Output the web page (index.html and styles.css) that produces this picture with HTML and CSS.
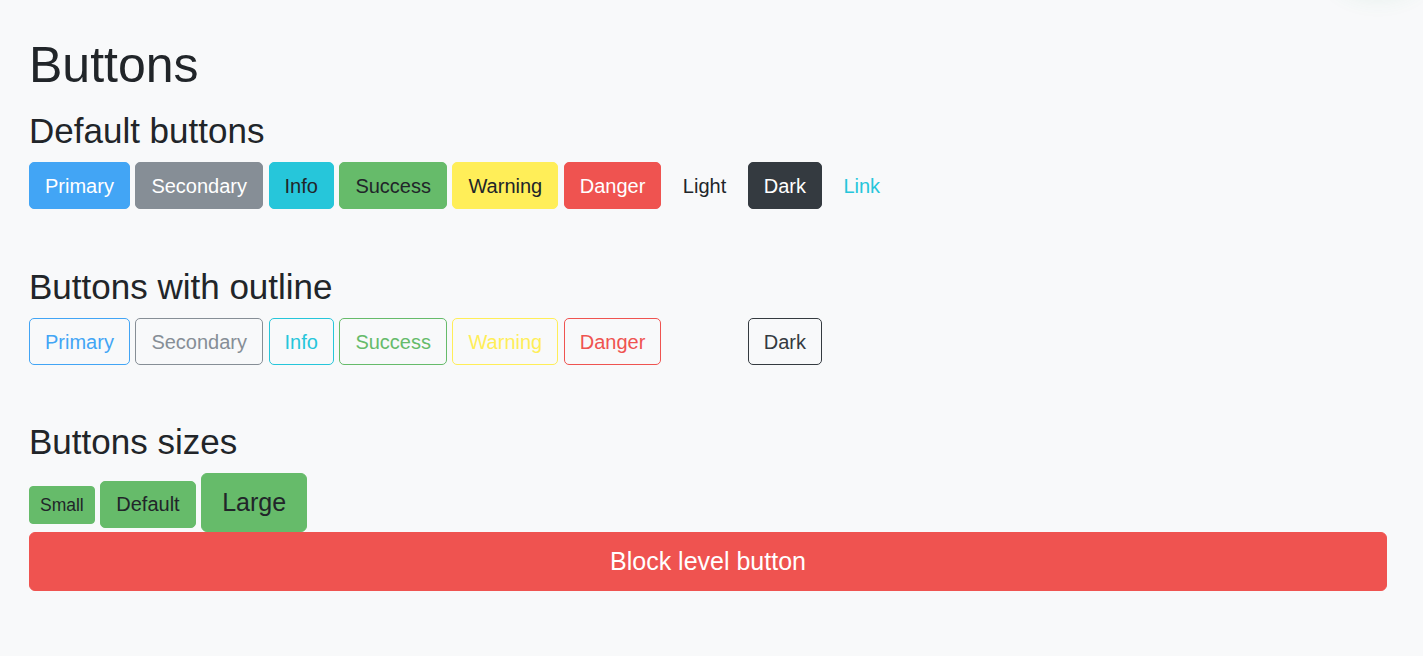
FILE: index.html
```html
<!DOCTYPE html>
<html lang="en">
<head>
<meta charset="utf-8">
<title>Buttons</title>
<link rel="stylesheet" href="styles.css">
</head>
<body>
<div class="glow"></div>
<main class="page">
  <h1 class="title">Buttons</h1>

  <h3 class="section-title">Default buttons</h3>
  <div class="btn-row gap-after">
    <button class="btn btn-primary">Primary</button>
    <button class="btn btn-secondary">Secondary</button>
    <button class="btn btn-info">Info</button>
    <button class="btn btn-success">Success</button>
    <button class="btn btn-warning">Warning</button>
    <button class="btn btn-danger">Danger</button>
    <button class="btn btn-light">Light</button>
    <button class="btn btn-dark">Dark</button>
    <button class="btn btn-link">Link</button>
  </div>

  <h3 class="section-title">Buttons with outline</h3>
  <div class="btn-row gap-after-2">
    <button class="btn btn-outline-primary">Primary</button>
    <button class="btn btn-outline-secondary">Secondary</button>
    <button class="btn btn-outline-info">Info</button>
    <button class="btn btn-outline-success">Success</button>
    <button class="btn btn-outline-warning">Warning</button>
    <button class="btn btn-outline-danger">Danger</button>
    <button class="btn btn-outline-light">Light</button>
    <button class="btn btn-outline-dark">Dark</button>
  </div>

  <h3 class="section-title">Buttons sizes</h3>
  <div class="btn-row">
    <button class="btn btn-success btn-sm">Small</button>
    <button class="btn btn-success">Default</button>
    <button class="btn btn-success btn-lg">Large</button>
  </div>
  <button class="btn btn-danger btn-lg btn-block">Block level button</button>
</main>
</body>
</html>
```

FILE: styles.css
```css
html, body {
  margin: 0;
  padding: 0;
}

body {
  background: #f8f9fa;
  color: #212529;
  font-family: "Liberation Sans", Arial, sans-serif;
  font-size: 20px;
  line-height: 1.5;
  overflow: hidden;
}

.glow {
  position: absolute;
  top: -70px;
  right: 0;
  width: 90px;
  height: 60px;
  border-radius: 50%;
  box-shadow: 0 6px 24px rgba(60, 160, 110, 0.12);
}

.page {
  padding: 35px 36px 0 29px;
}

.title {
  font-size: 50px;
  line-height: 60px;
  font-weight: 400;
  margin: 0 0 15px;
}

.section-title {
  font-size: 35px;
  line-height: 42px;
  font-weight: 400;
  margin: 0 0 10px;
}

.btn-row {
  display: flex;
  align-items: baseline;
  gap: 5.5px;
}

.gap-after {
  margin-bottom: 57px;
}

.gap-after-2 {
  margin-bottom: 56px;
}

.btn {
  font-family: "Liberation Sans", Arial, sans-serif;
  font-size: 20px;
  line-height: 30px;
  padding: 7.5px 15px;
  border: 1px solid transparent;
  border-radius: 5px;
  background: transparent;
  color: #212529;
  cursor: pointer;
  white-space: nowrap;
}

.btn-sm {
  font-size: 17.5px;
  line-height: 26.25px;
  padding: 5px 10px;
  border-radius: 4px;
}

.btn-lg {
  font-size: 25px;
  line-height: 37px;
  padding: 10px 20px;
  border-radius: 6px;
}

.btn-block {
  display: block;
  width: 100%;
}

.btn-primary { background: #42a5f5; border-color: #42a5f5; color: #fff; }
.btn-secondary { background: #868e96; border-color: #868e96; color: #fff; }
.btn-info { background: #26c6da; border-color: #26c6da; color: #212529; }
.btn-success { background: #66bb6a; border-color: #66bb6a; color: #212529; }
.btn-warning { background: #ffee58; border-color: #ffee58; color: #212529; }
.btn-danger { background: #ef5350; border-color: #ef5350; color: #fff; }
.btn-light { background: #f8f9fa; border-color: #f8f9fa; color: #212529; }
.btn-dark { background: #343a40; border-color: #343a40; color: #fff; }
.btn-link { color: #26c6da; }

.btn-outline-primary { border-color: #42a5f5; color: #42a5f5; }
.btn-outline-secondary { border-color: #868e96; color: #868e96; }
.btn-outline-info { border-color: #26c6da; color: #26c6da; }
.btn-outline-success { border-color: #66bb6a; color: #66bb6a; }
.btn-outline-warning { border-color: #ffee58; color: #ffee58; }
.btn-outline-danger { border-color: #ef5350; color: #ef5350; }
.btn-outline-light { border-color: #f8f9fa; color: #f8f9fa; }
.btn-outline-dark { border-color: #343a40; color: #343a40; }
```
